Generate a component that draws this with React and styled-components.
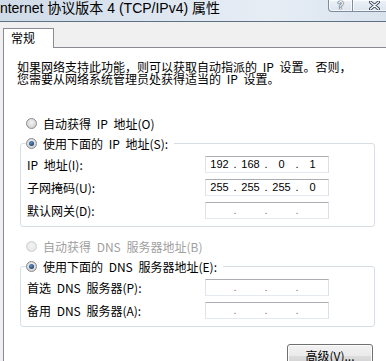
import React from "react";
import styled, { createGlobalStyle } from "styled-components";

const GlobalStyle = createGlobalStyle`
  html, body {
    margin: 0;
    padding: 0;
    background: #f0f0f0;
  }
  body {
    font-family: "Noto Sans CJK SC", "Liberation Sans", sans-serif;
    font-size: 12px;
    color: #000;
  }
`;

const Window = styled.div`
  width: 386px;
  height: 361px;
  overflow: hidden;
  background: #f0f0f0;
  display: flex;
  flex-direction: column;
`;

const TitleBar = styled.header`
  height: 22px;
  flex: none;
  box-sizing: border-box;
  display: flex;
  align-items: flex-start;
  background: linear-gradient(to right, #cfdbe8 0%, #dfe7f1 45%, #e6edf5 70%, #d9e3ee 100%);
  border-bottom: 1px solid #5f7082;
`;

const Title = styled.h1`
  flex: 1;
  min-width: 0;
  margin: 0 0 0 -4px;
  font-family: "Liberation Sans", "Noto Sans CJK SC", sans-serif;
  font-weight: 400;
  font-size: 14px;
  line-height: 16px;
  white-space: nowrap;
  color: #000;
`;

const CaptionButtons = styled.div`
  display: flex;
  flex: none;
  height: 12px;
  margin-right: -10px;
`;

const CaptionButton = styled.div`
  width: ${(p) => p.$w}px;
  flex: none;
  box-sizing: border-box;
  border: 1px solid #7c8b9e;
  border-top: none;
  border-left-width: ${(p) => (p.$first ? 1 : 0)}px;
  border-bottom-left-radius: ${(p) => (p.$first ? 4 : 0)}px;
  background: linear-gradient(#eef2f7, #dce4ee);
  box-shadow: inset 0 0 0 1px rgba(255, 255, 255, 0.7);
  display: flex;
  justify-content: center;
  align-items: flex-start;
  padding-top: 1px;
`;

const Body = styled.div`
  flex: 1;
  display: flex;
  flex-direction: column;
  padding: 6px 0 0 3px;
  min-height: 0;
`;

const TabStrip = styled.div`
  display: flex;
  margin-bottom: -1px;
  position: relative;
  z-index: 1;
`;

const Tab = styled.div`
  width: 51px;
  height: 20px;
  box-sizing: border-box;
  border: 1px solid #898c95;
  border-bottom: none;
  background: #fff;
  padding-left: 7px;
  line-height: 18px;
`;

const Panel = styled.section`
  flex: 1;
  width: 410px;
  box-sizing: border-box;
  background: #fff;
  border-top: 1px solid #898c95;
  border-left: 1px solid #898c95;
  padding: 13px 0 0 16px;
  display: flex;
  flex-direction: column;
  align-items: flex-start;
`;

const Intro = styled.p`
  margin: 0 0 0 -3px;
  line-height: 12px;
  word-spacing: 3px;
`;

const RadioRow = styled.label`
  display: flex;
  align-items: center;
  gap: 6px;
  height: 16px;
  margin: ${(p) => p.$top || 0}px 0 0 6px;
  color: ${(p) => (p.$disabled ? "#a0a0a0" : "#000")};
  white-space: nowrap;
  word-spacing: 3px;
`;

const LegendRow = styled(RadioRow)`
  margin: 0;
`;

const Radio = styled.span`
  position: relative;
  width: 11px;
  height: 11px;
  flex: none;
  box-sizing: border-box;
  border-radius: 50%;
  border: 1px solid ${(p) => (p.$disabled ? "#cfcfcf" : "#8a8a8a")};
  background: ${(p) =>
    p.$disabled
      ? "radial-gradient(circle at 50% 45%, #f3f3f3, #e2e2e2)"
      : "radial-gradient(circle at 50% 40%, #f4f4f4, #c8c8c8)"};

  &::after {
    content: "";
    display: ${(p) => (p.$checked ? "block" : "none")};
    position: absolute;
    left: 2px;
    top: 2px;
    width: 5px;
    height: 5px;
    border-radius: 50%;
    background: radial-gradient(circle at 40% 35%, #5c8fc8, #0e2a4d);
  }
`;

const Group = styled.fieldset`
  margin: 4px 0 0 0;
  width: 355px;
  box-sizing: border-box;
  min-width: 0;
  border: 1px solid #d5dfe5;
  border-radius: 3px;
  padding: 5px 0 7px 6px;
`;

const Legend = styled.legend`
  padding: 0 6px 0 0;
  margin-left: -1px;
`;

const Fields = styled.div`
  display: grid;
  grid-template-columns: 178px 124px;
  row-gap: 6px;
  align-items: center;
`;

const FieldLabel = styled.span`
  line-height: 17px;
  white-space: nowrap;
  word-spacing: 3px;
`;

const IpBox = styled.div`
  height: 17px;
  box-sizing: border-box;
  border: 1px solid;
  border-color: #abadb3 #dbdfe6 #e3e9ef #e2e3ea;
  background: #fff;
  display: flex;
  font-family: "Liberation Sans", sans-serif;
  font-size: 11px;
  line-height: 15px;
`;

const Octet = styled.span`
  width: 27px;
  text-align: center;
`;

const Dot = styled.span`
  width: 4px;
  text-align: center;
  color: ${(p) => (p.$empty ? "#7a7a7a" : "#000")};
`;

const AdvancedButton = styled.button`
  margin: 17px 0 0 267px;
  width: 86px;
  height: 23px;
  flex: none;
  box-sizing: border-box;
  border: 1px solid #707070;
  border-radius: 3px;
  background: linear-gradient(#f2f2f2 0%, #ebebeb 50%, #dddddd 51%, #cfcfcf 100%);
  box-shadow: inset 0 0 0 1px #fcfcfc;
  font-family: "Noto Sans CJK SC", sans-serif;
  font-size: 12px;
  padding: 0;
  color: #000;
`;

const HelpGlyph = styled.span`
  font-family: "Liberation Sans", sans-serif;
  font-weight: 700;
  font-size: 10px;
  line-height: 10px;
  color: #fff;
  text-shadow: 0 0 1px #2d3d52, 0 0 1px #2d3d52, 0 0 1px #2d3d52;
`;

const IpField = ({ value }) => {
  const parts = value ? value.split(".") : ["", "", "", ""];
  return (
    <IpBox>
      {parts.map((part, i) => (
        <React.Fragment key={i}>
          <Octet>{part}</Octet>
          {i < 3 && <Dot $empty={!value}>.</Dot>}
        </React.Fragment>
      ))}
    </IpBox>
  );
};

const CloseIcon = () => (
  <svg width="11" height="9" viewBox="0 0 11 9">
    <path d="M1.5 1 L9.5 8 M9.5 1 L1.5 8" stroke="#2d3d52" strokeWidth="3" strokeLinecap="round" />
    <path d="M1.5 1 L9.5 8 M9.5 1 L1.5 8" stroke="#fff" strokeWidth="1.4" strokeLinecap="round" />
  </svg>
);

export default function App() {
  return (
    <>
      <GlobalStyle />
      <Window>
        <TitleBar>
          <Title>Internet 协议版本 4 (TCP/IPv4) 属性</Title>
          <CaptionButtons>
            <CaptionButton $w={25} $first>
              <HelpGlyph>?</HelpGlyph>
            </CaptionButton>
            <CaptionButton $w={43}>
              <CloseIcon />
            </CaptionButton>
          </CaptionButtons>
        </TitleBar>
        <Body>
          <TabStrip>
            <Tab>常规</Tab>
          </TabStrip>
          <Panel>
            <Intro>
              如果网络支持此功能，则可以获取自动指派的 IP 设置。否则，
              <br />
              您需要从网络系统管理员处获得适当的 IP 设置。
            </Intro>

            <RadioRow $top={30}>
              <Radio />
              自动获得 IP 地址(O)
            </RadioRow>
            <Group>
              <Legend>
                <LegendRow>
                  <Radio $checked />
                  使用下面的 IP 地址(S):
                </LegendRow>
              </Legend>
              <Fields>
                <FieldLabel>IP 地址(I):</FieldLabel>
                <IpField value="192.168.0.1" />
                <FieldLabel>子网掩码(U):</FieldLabel>
                <IpField value="255.255.255.0" />
                <FieldLabel>默认网关(D):</FieldLabel>
                <IpField />
              </Fields>
            </Group>

            <RadioRow $top={11} $disabled>
              <Radio $disabled />
              自动获得 DNS 服务器地址(B)
            </RadioRow>
            <Group>
              <Legend>
                <LegendRow>
                  <Radio $checked />
                  使用下面的 DNS 服务器地址(E):
                </LegendRow>
              </Legend>
              <Fields>
                <FieldLabel>首选 DNS 服务器(P):</FieldLabel>
                <IpField />
                <FieldLabel>备用 DNS 服务器(A):</FieldLabel>
                <IpField />
              </Fields>
            </Group>

            <AdvancedButton>高级(V)...</AdvancedButton>
          </Panel>
        </Body>
      </Window>
    </>
  );
}
